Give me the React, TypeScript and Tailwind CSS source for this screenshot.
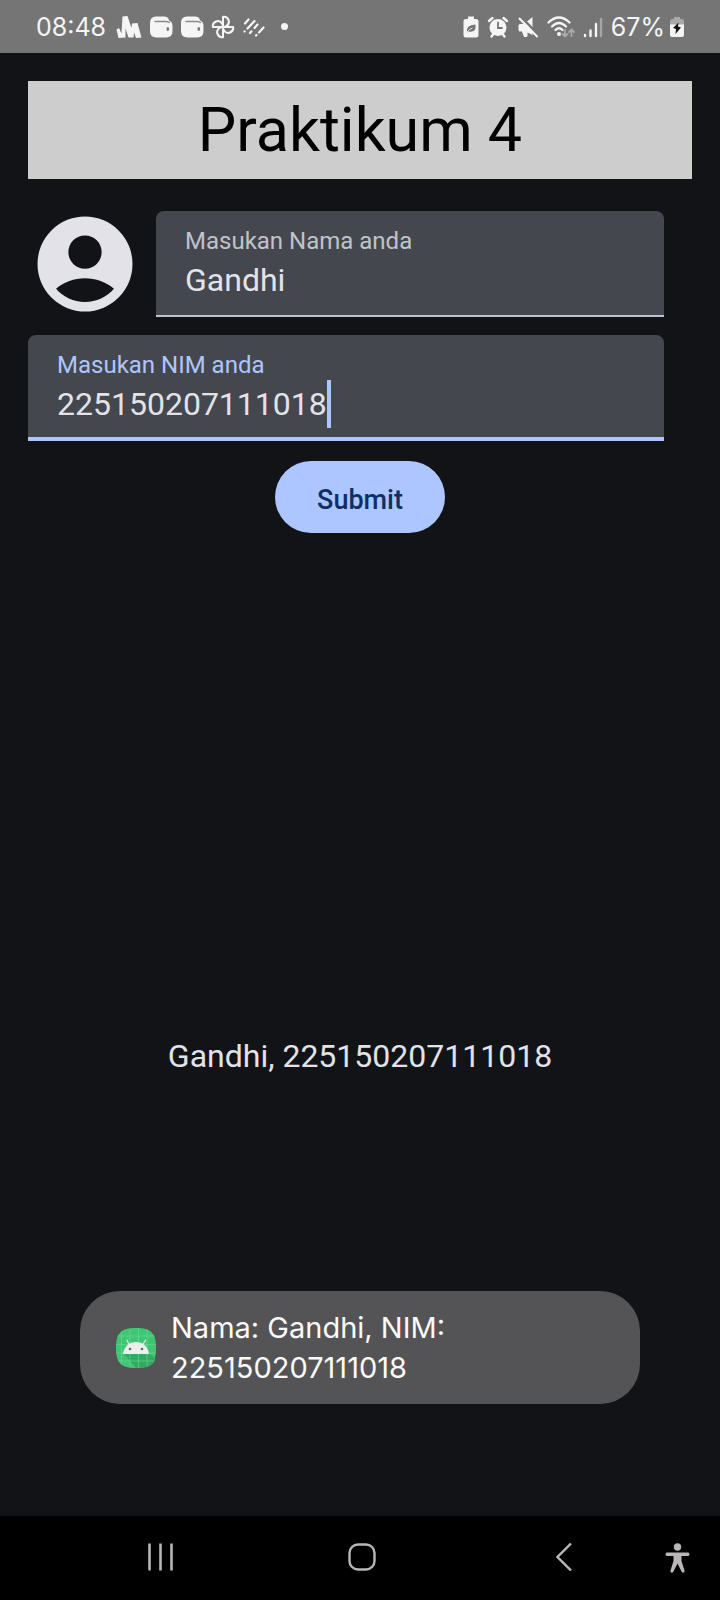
import { useId, useState } from "react";
import type { ReactNode } from "react";

function WaveLogo() {
  return (
    <svg className="h-6 w-[26px]" viewBox="0 0 26 24" fill="#f5f5f5">
      <path d="M0.500 14.500 L3 13 L5.500 18.500 L6.500 1.500 L11.500 1 L15.500 13 L16 8.500 L21.500 8 L25.500 22.500 L20 23 L18 17.500 L17.500 22.500 L12.500 22.500 L9.500 13.500 L9.500 22.500 L2.500 23 Z" />
    </svg>
  );
}

function WalletIcon() {
  return (
    <svg className="h-6 w-6" viewBox="0 0 24 24">
      <path
        d="M7 1.500 H15 Q19.500 1.500 20 5.500 Q23.500 6.500 23.500 11 V16 Q23.500 22.500 17 22.500 H7.500 Q1 22.500 1 16 V8 Q1 1.500 7 1.500 Z"
        fill="#f5f5f5"
      />
      <path d="M6 6.500 H16.500 Q19 6.500 20.500 7.500" stroke="#8a8a8a" strokeWidth="1.300" fill="none" strokeLinecap="round" />
      <ellipse cx="18.800" cy="14" rx="1.300" ry="2" fill="#757575" />
    </svg>
  );
}

function PinwheelIcon() {
  const blade = "M12 12 V1.800 H13.500 A5 5 0 0 1 15.500 11 Q14.500 12 12 12 Z";
  return (
    <svg className="h-6 w-6" viewBox="0 0 24 24" fill="none" stroke="#f5f5f5" strokeWidth="2" strokeLinejoin="round">
      <path d={blade} />
      <path d={blade} transform="rotate(90 12 12)" />
      <path d={blade} transform="rotate(180 12 12)" />
      <path d={blade} transform="rotate(270 12 12)" />
    </svg>
  );
}

function StripesIcon() {
  return (
    <svg className="h-6 w-6" viewBox="0 0 24 24" fill="none" stroke="#f5f5f5" strokeWidth="2.200" strokeLinecap="round">
      <path d="M3 8.500 L6.500 4.500 M2.500 16.500 L2.600 16.400 M5.500 13.500 L12.500 6 M8 18 L9.500 16.300 M12.500 13 L15.500 9.500 M14 20.500 L14.500 20 M17 17.500 L21.500 12.500" />
    </svg>
  );
}

function LeafBatteryIcon() {
  return (
    <svg className="h-6 w-4" viewBox="0 0 16 24">
      <path d="M5 1.500 H11 V4 H13 Q15.500 4 15.500 6.500 V20 Q15.500 22.500 13 22.500 H3 Q0.500 22.500 0.500 20 V6.500 Q0.500 4 3 4 H5 Z" fill="#f5f5f5" />
      <path d="M4 17.500 Q2.500 10 12.500 9.500 Q13.500 18 5.500 16.500 M3.500 17.500 Q6 13.500 9.500 12.500" fill="#757575" />
      <path d="M3.800 17.500 Q6 14 9.500 13" stroke="#f5f5f5" strokeWidth="0.900" fill="none" />
    </svg>
  );
}

function AlarmIcon() {
  return (
    <svg className="h-6 w-[22px]" viewBox="0 0 22 24" fill="none" strokeLinecap="round">
      <circle cx="11" cy="12.500" r="8.500" fill="#f5f5f5" />
      <path d="M2 6 L5.500 3 M20 6 L16.500 3 M4.500 21.500 L6 19.500 M17.500 21.500 L16 19.500" stroke="#f5f5f5" strokeWidth="2.400" />
      <path d="M11 7.500 V13 H15" stroke="#757575" strokeWidth="1.800" />
    </svg>
  );
}

function MuteIcon() {
  return (
    <svg className="h-6 w-[22px]" viewBox="0 0 22 24">
      <path d="M3 9 H7 L15.500 2 V20 L10.500 17.500 V21 Q10.500 22 9 22 H7 L5 16.500 H3 Q1.500 16.500 1.500 15 V10.500 Q1.500 9 3 9 Z" fill="#f5f5f5" />
      <path d="M5 3 L22 20.500" stroke="#757575" strokeWidth="2.600" />
      <path d="M2.500 3.500 L20 21.500" stroke="#f5f5f5" strokeWidth="2" strokeLinecap="round" />
    </svg>
  );
}

function WifiIcon() {
  return (
    <svg className="h-6 w-7" viewBox="0 0 28 24" fill="none" strokeLinecap="round">
      <g stroke="#f5f5f5" strokeWidth="2.300">
        <path d="M1.500 7.500 Q12 -2.500 22.500 7.500" />
        <path d="M5 11.500 Q12 4.500 19 11.500" />
        <path d="M8.500 15 Q12 11.500 15.500 15" />
      </g>
      <circle cx="12" cy="19" r="2" fill="#f5f5f5" />
      <path d="M18 15 V21 M15.500 19 L18 21.500 L20.500 19 M24.500 21 V15 M22 17 L24.500 14.500 L27 17" stroke="#aaaaaa" strokeWidth="1.800" />
    </svg>
  );
}

function SignalIcon() {
  return (
    <svg className="h-6 w-5" viewBox="0 0 20 24" strokeWidth="2.400" strokeLinecap="round">
      <path d="M2 20 V21 M7.500 15.500 V21 M13 9 V21" stroke="#f5f5f5" />
      <path d="M18 4 V21" stroke="#a6a6a6" />
    </svg>
  );
}

function ChargingIcon() {
  return (
    <svg className="h-6 w-4" viewBox="0 0 16 24">
      <path d="M5 2 H11 V4 H13 Q15 4 15 6.500 V10 H1 V6.500 Q1 4 3 4 H5 Z" fill="#a9a9a9" />
      <path d="M1 9.500 H15 V20 Q15 22 13 22 H3 Q1 22 1 20 Z" fill="#f5f5f5" />
      <path d="M9.500 7.500 L4 13 L7 14 L6.500 19 L12 12.500 L9 11.500 Z" fill="#111111" />
    </svg>
  );
}

function StatusBar() {
  return (
    <header className="flex h-[53px] items-center justify-between bg-[#757575] pr-[35px] pl-9 font-['Inter',sans-serif] text-[25px] leading-8 text-[#f5f5f5]">
      <div className="flex items-center gap-[10px]">
        <time>08:48</time>
        <div className="flex items-center gap-[7px]">
          <WaveLogo />
          <WalletIcon />
          <WalletIcon />
          <PinwheelIcon />
          <StripesIcon />
          <span className="ml-2 size-[7px] rounded-full bg-[#f5f5f5]" />
        </div>
      </div>
      <div className="flex items-center gap-2">
        <LeafBatteryIcon />
        <AlarmIcon />
        <MuteIcon />
        <WifiIcon />
        <SignalIcon />
        <div className="flex items-center gap-1">
          <span>67%</span>
          <ChargingIcon />
        </div>
      </div>
    </header>
  );
}

function AvatarIcon() {
  return (
    <svg className="size-[114px] shrink-0" viewBox="0 0 24 24" fill="#e3e2e9" fillRule="evenodd">
      <path d="M12 2 A10 10 0 1 0 12 22 A10 10 0 1 0 12 2 Z M12 6 A3.500 3.500 0 1 1 12 13 A3.500 3.500 0 1 1 12 6 Z M12 20 C9.600 20 7.400 18.900 5.900 17.200 C7.600 15.800 9.700 15 12 15 C14.300 15 16.400 15.800 18.100 17.200 C16.600 18.900 14.400 20 12 20 Z" />
    </svg>
  );
}

interface FieldProps {
  label: string;
  value: string;
  onChange: (value: string) => void;
  active?: boolean;
}

function Field({ label, value, onChange, active = false }: FieldProps) {
  const id = useId();
  return (
    <div
      className={
        active
          ? "flex h-[106px] min-w-0 flex-1 flex-col gap-px rounded-t-lg border-b-4 border-[#aec6ff] bg-[#44474e] px-[29px] pt-4"
          : "flex h-[106px] min-w-0 flex-1 flex-col gap-px rounded-t-lg border-b-2 border-[#c0c3cc] bg-[#44474e] px-[29px] pt-4"
      }
    >
      <label
        htmlFor={id}
        className={active ? "text-2xl leading-7 text-[#aec6ff]" : "text-2xl leading-7 text-[#c0c3cc]"}
      >
        {label}
      </label>
      <div className="flex items-center">
        <input
          id={id}
          value={value}
          onChange={(event) => onChange(event.target.value)}
          className="field-sizing-content h-12 max-w-full bg-transparent text-[32px] leading-[48px] text-[#e3e2e9] caret-transparent outline-none"
        />
        {active && <span className="h-12 w-1 shrink-0 bg-[#aec6ff]" />}
      </div>
    </div>
  );
}

function AppLogo() {
  return (
    <svg className="size-10 shrink-0" viewBox="0 0 40 40">
      <path d="M20 0 C35 0 40 5 40 20 C40 35 35 40 20 40 C5 40 0 35 0 20 C0 5 5 0 20 0 Z" fill="#3fc674" />
      <path d="M8 26 H33 L39.500 30 C38 37 33 40 20 40 Z" fill="#32ab62" />
      <path d="M5.500 4 V36 M14 0.500 V39.500 M22.500 0 V40 M31 1.500 V38.500 M1.500 8 H38.500 M0 16.500 H40 M0 25 H40 M2 33 H38" stroke="#6cd996" strokeWidth="0.600" />
      <path d="M7 26 C8 18.500 13 14 20 14 C27 14 32 18.500 33 26 Z" fill="#eeeeee" />
      <path d="M13 16.500 L11 12 M27 16.500 L29.500 12" stroke="#d6efdf" strokeWidth="1.200" strokeLinecap="round" />
      <circle cx="14" cy="21" r="1.300" fill="#55705f" />
      <circle cx="26" cy="21" r="1.300" fill="#55705f" />
    </svg>
  );
}

function NavButton({ label, children }: { label: string; children: ReactNode }) {
  return (
    <button type="button" aria-label={label} className="flex h-full flex-1 items-center justify-center">
      {children}
    </button>
  );
}

function NavigationBar() {
  return (
    <nav className="flex h-[84px] items-center bg-black pr-[30px] pb-[2px] pl-[59px]">
      <NavButton label="Recents">
        <svg className="h-7 w-[26px]" viewBox="0 0 26 28" stroke="#b9b7b7" strokeWidth="2.600">
          <path d="M2.500 0.500 V27.500 M13.500 0.500 V27.500 M24.500 0.500 V27.500" />
        </svg>
      </NavButton>
      <NavButton label="Home">
        <svg className="size-7" viewBox="0 0 28 28" fill="none" stroke="#b9b7b7" strokeWidth="2.400">
          <rect x="1.500" y="1.500" width="25" height="25" rx="8.500" />
        </svg>
      </NavButton>
      <NavButton label="Back">
        <svg className="h-7 w-4" viewBox="0 0 16 28" fill="none" stroke="#b9b7b7" strokeWidth="2.400">
          <path d="M15 0.500 L1.500 14 L15 27.500" />
        </svg>
      </NavButton>
      <button type="button" aria-label="Accessibility" className="flex h-full w-[25px] items-center justify-center pt-[2px]">
        <svg className="h-[30px] w-[25px]" viewBox="0 0 25 30" fill="#b9b7b7">
          <circle cx="12.500" cy="4" r="3.700" />
          <path d="M2 9.500 H23 Q24.500 9.500 24.500 11.200 Q24.500 13 23 13 H16.500 V18 L19.500 27.500 Q20 29.700 18 29.700 Q16.800 29.700 16.300 28 L12.500 20.500 L8.700 28 Q8.200 29.700 7 29.700 Q5 29.700 5.500 27.500 L8.500 18 V13 H2 Q0.500 13 0.500 11.200 Q0.500 9.500 2 9.500 Z" />
        </svg>
      </button>
    </nav>
  );
}

export default function App() {
  const [name, setName] = useState("Gandhi");
  const [nim, setNim] = useState("225150207111018");
  const [result, setResult] = useState({ name: "Gandhi", nim: "225150207111018" });

  return (
    <div className="relative flex min-h-screen flex-col bg-[#111317] font-['Roboto',sans-serif]">
      <StatusBar />
      <main className="flex flex-1 flex-col px-7 pt-7">
        <h1 className="bg-[#cdcdcd] py-3 text-center text-[61px] leading-[74px] text-black">Praktikum 4</h1>
        <form
          className="flex flex-col pt-7"
          onSubmit={(event) => {
            event.preventDefault();
            setResult({ name, nim });
          }}
        >
          <div className="flex items-center gap-[14px] pr-7">
            <AvatarIcon />
            <Field label="Masukan Nama anda" value={name} onChange={setName} />
          </div>
          <div className="flex pt-[14px] pr-7">
            <Field label="Masukan NIM anda" value={nim} onChange={setNim} active />
          </div>
          <button
            type="submit"
            className="mt-5 h-[72px] self-center rounded-full bg-[#adc6ff] px-[42px] pt-[6px] text-[27px] font-medium text-[#102f66]"
          >
            Submit
          </button>
        </form>
        <div className="flex-[8]" />
        <p className="text-center text-[32px] leading-[48px] text-[#e3e2e9]">
          {result.name}, {result.nim}
        </p>
        <div className="flex-[7]" />
      </main>
      <NavigationBar />
      <div
        role="status"
        className="absolute inset-x-20 bottom-[196px] flex items-center gap-[15px] rounded-[40px] bg-[#545456] px-9 pt-[17px] pb-4 font-['Inter',sans-serif] text-[29px] leading-10 text-[#fafafa]"
      >
        <AppLogo />
        <p>
          Nama: {result.name}, NIM:
          <br />
          {result.nim}
        </p>
      </div>
    </div>
  );
}
